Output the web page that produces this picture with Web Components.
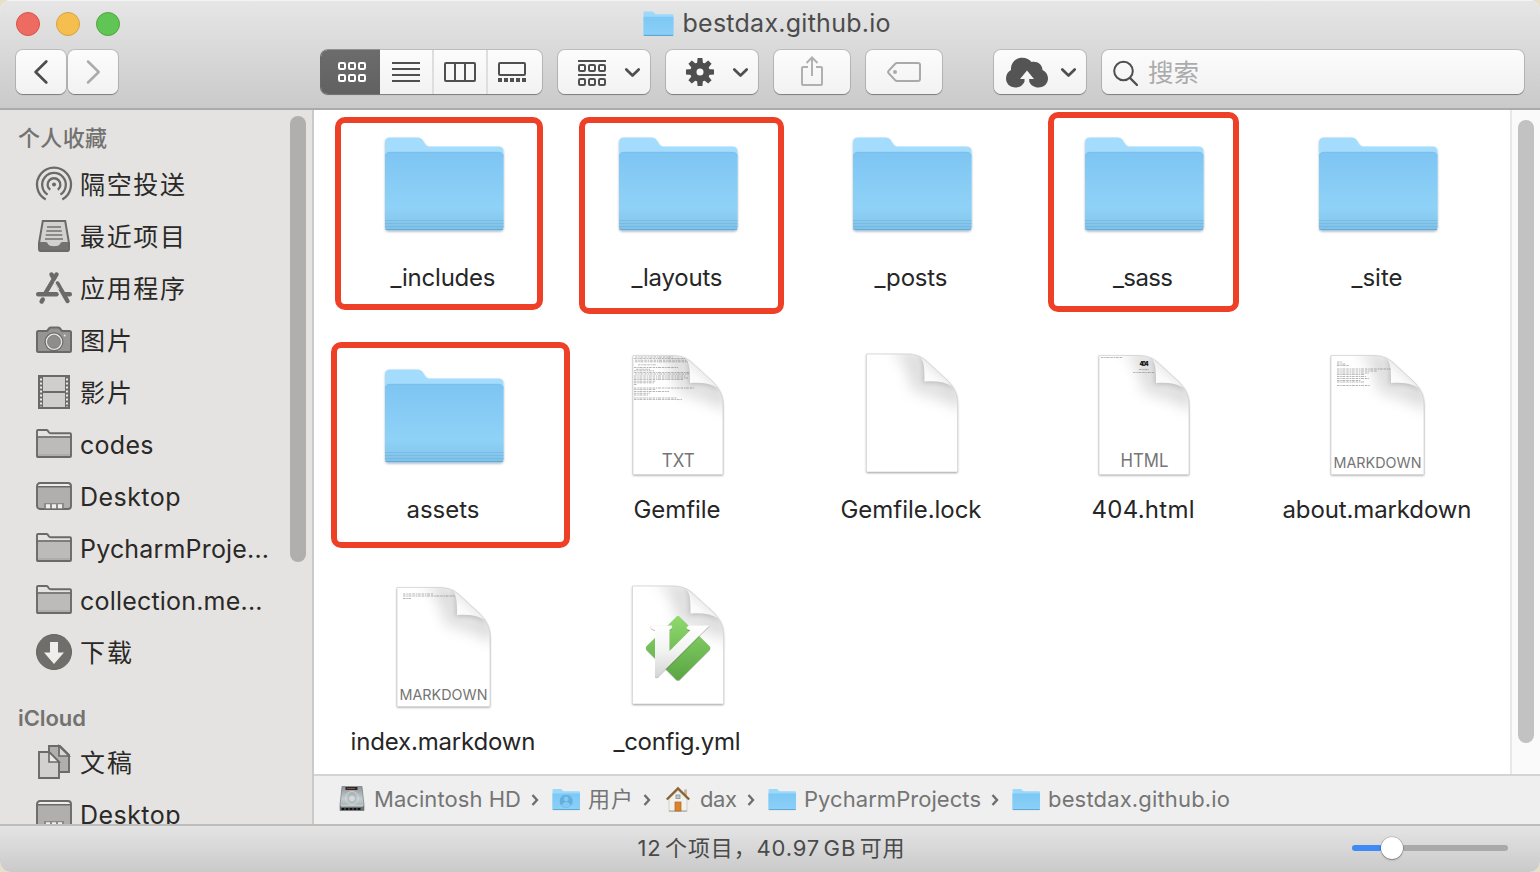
<!DOCTYPE html>
<html lang="zh-CN">
<head>
<meta charset="utf-8">
<title>bestdax.github.io</title>
<style>
html,body{margin:0;height:100%;overflow:hidden;background:#e6dfcb}
body{font-family:Inter,"Noto Sans CJK SC",sans-serif;color:#262626}
</style>
</head>
<body>
<finder-window>
  <tool-bar slot="toolbar"></tool-bar>
  <side-bar slot="sidebar">
    <side-heading style="height:38px;padding-bottom:4px;font-weight:500"><text-run w="89">个人收藏</text-run></side-heading>
    <side-item icon="airdrop"><text-run w="105">隔空投送</text-run></side-item>
    <side-item icon="recents"><text-run w="105">最近项目</text-run></side-item>
    <side-item icon="apps"><text-run w="105">应用程序</text-run></side-item>
    <side-item icon="camera"><text-run w="52">图片</text-run></side-item>
    <side-item icon="film"><text-run w="52">影片</text-run></side-item>
    <side-item icon="folder"><text-run w="73.5">codes</text-run></side-item>
    <side-item icon="desktop"><text-run w="100.5">Desktop</text-run></side-item>
    <side-item icon="folder"><text-run w="189">PycharmProje...</text-run></side-item>
    <side-item icon="folder"><text-run w="182.5">collection.me...</text-run></side-item>
    <side-item icon="download"><text-run w="52">下载</text-run></side-item>
    <side-heading style="height:38px;margin-top:20px"><text-run w="68">iCloud</text-run></side-heading>
    <side-item icon="docs"><text-run w="52">文稿</text-run></side-item>
    <side-item icon="desktop"><text-run w="100.5">Desktop</text-run></side-item>
  </side-bar>
  <file-grid slot="files">
    <file-item kind="folder"><text-run w="105">_includes</text-run></file-item>
    <file-item kind="folder"><text-run w="91">_layouts</text-run></file-item>
    <file-item kind="folder"><text-run w="73">_posts</text-run></file-item>
    <file-item kind="folder"><text-run w="60">_sass</text-run></file-item>
    <file-item kind="folder"><text-run w="51">_site</text-run></file-item>
    <file-item kind="folder"><text-run w="73">assets</text-run></file-item>
    <file-item kind="txt"><text-run w="87">Gemfile</text-run></file-item>
    <file-item kind="blank"><text-run w="141">Gemfile.lock</text-run></file-item>
    <file-item kind="html"><text-run w="103">404.html</text-run></file-item>
    <file-item kind="about"><text-run w="189">about.markdown</text-run></file-item>
    <file-item kind="index"><text-run w="185">index.markdown</text-run></file-item>
    <file-item kind="vim"><text-run w="127">_config.yml</text-run></file-item>
    <mark-box slot="marks" style="left:20.5px;top:7px;width:208.5px;height:193px"></mark-box>
    <mark-box slot="marks" style="left:264.5px;top:7px;width:205.5px;height:197px"></mark-box>
    <mark-box slot="marks" style="left:733.5px;top:2px;width:191.500px;height:200px"></mark-box>
    <mark-box slot="marks" style="left:17px;top:232px;width:239px;height:206px"></mark-box>
  </file-grid>
  <path-bar slot="path">
    <path-item icon="disk"><text-run w="147">Macintosh HD</text-run></path-item>
    <path-item icon="users"><text-run w="45">用户</text-run></path-item>
    <path-item icon="home"><text-run w="37">dax</text-run></path-item>
    <path-item icon="folder"><text-run w="177">PycharmProjects</text-run></path-item>
    <path-item icon="folder" last><text-run w="182">bestdax.github.io</text-run></path-item>
  </path-bar>
  <status-bar slot="status"><text-run w="267" style="word-spacing:-3.5px">12 个项目，40.97 GB 可用</text-run></status-bar>
</finder-window>

<script>
const define = (name, html, after) => {
  const tpl = document.createElement('template');
  tpl.innerHTML = typeof html === 'string' ? html : '';
  customElements.define(name, class extends HTMLElement {
    connectedCallback() {
      if (this.shadowRoot) return;
      const root = this.attachShadow({ mode: 'open' });
      if (typeof html === 'function') root.innerHTML = html(this);
      else root.append(tpl.content.cloneNode(true));
      if (after) after(this, root);
    }
  });
};

/* ---------- artwork ---------- */
const folderArt = `
<defs>
<linearGradient id="f" x1="0" y1="0" x2="0" y2="1"><stop offset="0" stop-color="#7ec5f3"/><stop offset=".7" stop-color="#8fd2f7"/><stop offset=".86" stop-color="#88caf0"/><stop offset="1" stop-color="#7ebfe7"/></linearGradient>
<filter id="s" x="-10%" y="-10%" width="120%" height="125%"><feDropShadow dx="0" dy="1" stdDeviation="1" flood-color="#000" flood-opacity=".28"/></filter>
</defs>
<g filter="url(#s)"><path d="M5 22.500q0-5 5-5H37.500c2.500 0 4 .8 5.300 2.800l2.600 3.900c1.200 1.700 2.400 2.300 4.400 2.300H118.500q5 0 5 5V107q0 3.500-3.500 3.500H8.500Q5 110.500 5 107Z" fill="#a4dcfd"/>
<path d="M5 37q0-5 5-5H118.500q5 0 5 5V107q0 3.500-3.500 3.500H8.500Q5 110.500 5 107Z" fill="url(#f)"/></g>
<path d="M5.300 36.500q.3-4.200 4.700-4.200H118.500q4.500 0 4.800 4.200" fill="none" stroke="#75bdeb" stroke-width=".7"/>
<path d="M5 100.500H123.500M5 103.500H123.500M5 106.500H123.500" stroke="#6fafd8" stroke-width="1" opacity=".5"/>
<path d="M5.500 109.500H123" stroke="#69a5cb" stroke-width="1.200" opacity=".8"/>`;

const doc = (x, x2, y, y2, inner, top = '') => {
  const X = n => x2 - 109 + n, Y = n => y - 3.5 + n;
  const page = `M${x} ${y}H${X(57)}C${X(68)} ${y} ${X(73)} ${Y(6)} ${X(79)} ${Y(11.5)}L${X(98)} ${Y(29)}C${X(106)} ${Y(37)} ${X(109)} ${Y(43)} ${X(109)} ${Y(54)}V${y2}H${x}Z`;
  return `<defs>
<filter id="s" x="-10%" y="-10%" width="120%" height="125%"><feDropShadow dx="0" dy="1" stdDeviation="1.100" flood-color="#000" flood-opacity=".38"/></filter>
<filter id="b" x="-60%" y="-60%" width="220%" height="220%"><feGaussianBlur stdDeviation="8"/></filter>
<filter id="b2" x="-50%" y="-50%" width="200%" height="200%"><feGaussianBlur stdDeviation="2.500"/></filter>
<linearGradient id="c" x1="0" y1="1" x2=".6" y2=".35"><stop offset="0" stop-color="#fff"/><stop offset=".55" stop-color="#fafafa"/><stop offset="1" stop-color="#e6e6e6"/></linearGradient>
<clipPath id="k"><path d="${page}"/></clipPath></defs>
<path d="${page}" fill="#fff" filter="url(#s)"/>
<g clip-path="url(#k)">
<path d="M${X(40)} ${Y(-4)}L${X(76)} ${Y(4)}V${Y(31)}L${X(114)} ${Y(34)}V${Y(60)}C${X(98)} ${Y(46)} ${X(76)} ${Y(42)} ${X(64)} ${Y(39)}C${X(64)} ${Y(20)} ${X(56)} ${Y(8)} ${X(40)} ${Y(-4)}Z" fill="#000" opacity=".17" filter="url(#b)"/>
<path d="M${X(70)} ${Y(3)}C${X(75)} ${Y(12)} ${X(75)} ${Y(20)} ${X(75)} ${Y(32)}C${X(90)} ${Y(32)} ${X(98)} ${Y(34)} ${X(106)} ${Y(39)}L${X(100)} ${Y(30)}Z" fill="#000" opacity=".2" filter="url(#b2)"/>
${inner}
<path d="M${X(70.5)} ${Y(5)}C${X(75.5)} ${Y(10)} ${X(76)} ${Y(16)} ${X(76)} ${Y(31)}C${X(88)} ${Y(30)} ${X(97)} ${Y(31.5)} ${X(104)} ${Y(36)}L${X(98)} ${Y(29)}L${X(79)} ${Y(11.5)}Z" fill="url(#c)"/>
</g>
<path d="${page}" fill="none" stroke="#c8c8c8" stroke-width=".6"/>${top}`;
};
const tag = (t, cx, y, size, len) => `<text x="${cx}" y="${y}" text-anchor="middle" font-family="Inter,sans-serif" font-weight="400" font-size="${size}" fill="#757575" textLength="${len}" lengthAdjust="spacingAndGlyphs">${t}</text>`;
const lines = (rows, dash = '2.500 .8 1.500 .6 3 .9') => rows.map(([x, y, w, o]) => `<path d="M${x} ${y}h${w}" stroke="#444" stroke-width=".7" stroke-dasharray="${dash}" opacity="${o || .55}"/>`).join('');

const fileArt = {
  folder: folderArt,
  txt: doc(19, 109, 3.5, 122.5, lines([[21,5,38],[20,6.600,52],[21,8.200,52],[21,9.800,54],[24,12.800,18],[20,15.500,44],[22,17.300,14],[20,18.800,20],[20,20.400,56],[21,22,54],[20,24,52],[20,26,54],[20,27.600,50],[20,29.200,22],[20,30.800,20],[20,32.500,3],[20,36,60],[20,37.600,22],[20,39.500,35],[20,41.300,16],[20,43,14],[20,46,43],[20,47.600,48]]), tag('TXT', 64.300, 114.800, 18, 33)),
  blank: doc(18.5, 109.5, 2, 120, ''),
  html: doc(19, 109, 3.5, 122.5, lines([[21,5.500,22]]) + `<text x="64" y="14" text-anchor="middle" font-family="Inter,sans-serif" font-weight="900" font-size="5.500" fill="#111" textLength="9">404</text>` + lines([[59,17.600,10],[53,20.600,22]]), tag('HTML', 64.500, 114.800, 18, 48)),
  about: doc(17, 110, 3.5, 122.5, lines([[23,10,5],[23,12,9],[23,13.500,12],[23,17,54],[23,19,40],[23,21,32],[23,22.600,28],[23,24.500,29],[23,26.500,32],[23,28.500,24],[23,30,28],[23,33.500,33]]), tag('MARKDOWN', 63.500, 116, 15, 88)),
  index: doc(17, 110, 3.5, 122.5, lines([[23,10,30],[23,12,52],[23,14.500,8]]), tag('MARKDOWN', 63.500, 116, 15, 88)),
  vim: doc(18.5, 109.5, 2, 120, '', `<defs><linearGradient id="g" x1="0" y1="0" x2="0" y2="1"><stop offset="0" stop-color="#8fd96e"/><stop offset="1" stop-color="#5aa543"/></linearGradient>
<linearGradient id="v" x1="0" y1="0" x2="0" y2="1"><stop offset="0" stop-color="#fff"/><stop offset=".5" stop-color="#f1f3f1"/><stop offset="1" stop-color="#d4d4d4"/></linearGradient>
<filter id="vs" x="-10%" y="-10%" width="120%" height="120%"><feDropShadow dx="0" dy=".6" stdDeviation=".7" flood-opacity=".5"/></filter></defs>
<path d="M62 33.200q2-2.200 4 0L95.300 62q2 2 0 4L66 95.200q-2 2.200-4 0L32.800 66q-2-2 0-4Z" fill="url(#g)" filter="url(#vs)"/>
<path d="M36 41.500H58q1 3-2.500 4.200V67L76.500 46q-4-.5-4-2.500l2-2H95.500L44.500 92.300q-2.500 2-3.500-.3V46q-4.500-1-5-4.500Z" fill="url(#v)" filter="url(#vs)"/>`)
};

const sideArt = {
  airdrop: `<g fill="none" stroke="#6b6a68" stroke-width="2.300"><circle cx="18" cy="17.600" r="2" fill="#6b6a68" stroke="none"/><path d="M14.200 22.800a6.400 6.400 0 1 1 7.600 0"/><path d="M11.600 27.600a11.800 11.800 0 1 1 12.800 0"/><path d="M9.700 32.500a17 17 0 1 1 16.600 0"/></g>`,
  recents: `<path d="M7 2H29L33 24V32q0 1-1 1H4q-1 0-1-1V24Z" fill="#d2d1cf"/><path d="M3 23H9.500q2 0 2.500 2c1 3 11 3 12 0q.5-2 2.500-2H33V31q0 2-2 2H5q-2 0-2-2Z" fill="#73726f"/><path d="M6.800 2H29.200L33 24V30q0 2-2 2H5q-2 0-2-2V24Z" fill="none" stroke="#6b6a68" stroke-width="2"/><path d="M11 8H25M10.300 12H25.700M9.700 16H26.300M9 20H27" stroke="#73726f" stroke-width="1.700"/>`,
  apps: `<g stroke="#6b6a68" fill="none" stroke-linecap="round"><path d="M2.200 23.200H20.500" stroke-width="4.400"/><path d="M28.500 23.200H33.800" stroke-width="4.400"/><path d="M20.500 3.500 9.500 22" stroke-width="4.400"/><path d="M15.500 3.500 17 6" stroke-width="4.400"/><path d="M21.500 12.500 31.500 30" stroke-width="4.400"/><path d="M6.800 28.500 5.600 30.500" stroke-width="4.400"/></g><path d="M18.300 10.500 23 18.500" stroke="#e4e3e1" stroke-width="1"/>`,
  camera: `<path d="M1 9.500q0-1.500 1.500-1.500H11l2.500-3q.5-.6 1.500-.6h7q1 0 1.500.6l2.500 3H33.500Q35 8 35 9.500V27.500q0 1.500-1.500 1.500H2.500Q1 29 1 27.500Z" fill="#969593" stroke="#6b6a68" stroke-width="2"/><circle cx="18" cy="18.800" r="9.500" fill="#6b6a68"/><circle cx="18" cy="18.800" r="8.300" fill="#e4e3e1"/><circle cx="18" cy="18.800" r="6.500" fill="#8e8d8b" stroke="#777674" stroke-width=".8"/><circle cx="28.700" cy="12.500" r="1" fill="#e4e3e1"/>`,
  film: `<rect x="3" y="1" width="30" height="32" fill="#cfcecc" stroke="#6b6a68" stroke-width="2"/><path d="M5 1V33M31 1V33" stroke="#6b6a68" stroke-width="4"/><path d="M5 3.500V32M31 3.500V32" stroke="#eae9e7" stroke-width="2" stroke-dasharray="2 2"/><path d="M6 17H30" stroke="#6b6a68" stroke-width="2"/>`,
  folder: `<path d="M1 9V29q0 1 1 1H34q1 0 1-1V9Z" fill="#bcbbb9"/><path d="M2 28H34" stroke="#a5a4a2" stroke-width="1.200"/><path d="M1 29V4q0-1 1-1H10.500q.8 0 1.200.6L13 5.500q.5.700 1.300.7H34q1 0 1 1V29q0 1-1 1H2q-1 0-1-1Z" fill="none" stroke="#6b6a68" stroke-width="1.900"/><path d="M1 12q0-2 1.500-2H33.500Q35 10 35 12" fill="none" stroke="#6b6a68" stroke-width="1.700"/>`,
  desktop: `<rect x="1" y="4" width="34" height="26" rx="3" fill="#b0afad"/><path d="M2 7q0-2 2-2H32q2 0 2 2Z" fill="#eeedeb"/><rect x="1" y="4" width="34" height="26" rx="3" fill="none" stroke="#6b6a68" stroke-width="1.900"/><path d="M1 7.800H35" stroke="#6b6a68" stroke-width="1.600"/><rect x="8" y="24" width="20" height="5.500" fill="#8b8a88"/><path d="M10 25.200h4v4h-4zM16 25.200h4v4h-4zM22 25.200h4v4h-4z" fill="#f0efed"/>`,
  download: `<circle cx="18" cy="17" r="17.500" fill="#6f6e6b" stroke="#656462" stroke-width="1"/><path d="M14 7H22V17.500H28L18 29 8 17.500H14Z" fill="#efeeec"/>`,
  docs: `<path d="M13 1H24L33 10V27H13Z" fill="#b0afad" stroke="#6b6a68" stroke-width="1.900"/><path d="M23 1V11H33Z" fill="#d8d7d5" stroke="#6b6a68" stroke-width="1.700"/><path d="M3 7H13L23 17V33H3Z" fill="#d2d1cf" stroke="#6b6a68" stroke-width="1.900"/><path d="M13 7V17H23Z" fill="#e9e8e6" stroke="#6b6a68" stroke-width="1.700"/>`
};

const miniFolder = `<defs><linearGradient id="m" x1="0" y1="0" x2="0" y2="1"><stop offset="0" stop-color="#7cc8f4"/><stop offset="1" stop-color="#8bd0f8"/></linearGradient></defs><path d="M.5 5q0-1 1-1H9l2.500 2.200H27q1 0 1 1V24.500H.5Z" fill="#9bd8fa"/><path d="M.5 8.500H28V24q0 .8-.8.8H1.300Q.5 24.800.5 24Z" fill="url(#m)"/><path d="M.8 24.600H27.700" stroke="#5fa3cd" stroke-width="1"/>`;
const pathArt = {
  folder: miniFolder,
  users: miniFolder + `<circle cx="14.200" cy="16.200" r="6.500" fill="#62afe0"/><circle cx="14.200" cy="14" r="2.400" fill="#84c9f2"/><path d="M9.800 20.500q1-3.500 4.400-3.500t4.400 3.500q-4.400 4-8.800 0Z" fill="#84c9f2"/>`,
  disk: `<defs><linearGradient id="d" x1="0" y1="0" x2="0" y2="1"><stop offset="0" stop-color="#8d9496"/><stop offset=".5" stop-color="#c2cbce"/><stop offset="1" stop-color="#a2a9ab"/></linearGradient></defs><path d="M4 1.500H24L26 20V25.500H2V20Z" fill="url(#d)" stroke="#777d7f" stroke-width=".7"/><rect x="7.500" y="2" width="12" height="3" fill="#2a2a2c"/><path d="M9 3.500h8" stroke="#c55" stroke-width=".7"/><circle cx="14" cy="13" r="6.500" fill="none" stroke="#dbe2e4" stroke-width=".7"/><circle cx="14" cy="13.500" r="3.500" fill="#d3dadc" stroke="#9ba2a4" stroke-width=".6"/><path d="M2 21H26V25.500H2Z" fill="#6a6f71"/><path d="M3 21H25" stroke="#dde2e3" stroke-width="1"/><path d="M3.500 24h20" stroke="#111" stroke-width="1.800" stroke-dasharray="3 1"/>`,
  home: `<path d="M5 14 14 5.500 23 14V26.500H5Z" fill="#f1f1ee" stroke="#c9c9c4" stroke-width=".8"/><path d="M5 26H23" stroke="#aaa" stroke-width="1.200"/><rect x="20" y="4.500" width="3" height="6" fill="#c9b99c"/><path d="M2.800 14.500 14 3.500 25.200 14.500" fill="none" stroke="#8a6437" stroke-width="2.400"/><rect x="11" y="17" width="6" height="9" fill="#e08325" stroke="#a9672a" stroke-width=".7"/><rect x="12" y="10" width="4" height="3.500" fill="#a9d0ea" stroke="#9a8a72" stroke-width=".8"/>`
};

const sq = (x, y, c) => `<rect x="${x + 1}" y="${y + 1}" width="6" height="6" rx="1.200" fill="none" stroke="${c}" stroke-width="2"/>`;
const grid6 = (x, ys, c) => ys.map(y => [0, 10, 20].map(d => sq(x + d, y, c)).join('')).join('');
const chev = x => `<path d="M${x} 69.500l6.200 6 6.200-6" fill="none" stroke="#4f4f4f" stroke-width="2.700" stroke-linecap="round" stroke-linejoin="round"/>`;
const toolArt = {
  back: `<path d="M46.300 61.500 35.600 72l10.700 10.500" fill="none" stroke="#4d4d4d" stroke-width="2.700" stroke-linecap="round" stroke-linejoin="round"/>`,
  forward: `<path d="M88 61.500 98.700 72 88 82.500" fill="none" stroke="#ababab" stroke-width="2.500" stroke-linecap="round" stroke-linejoin="round"/>`,
  icons: grid6(338, [62, 74], '#fff'),
  list: `<path d="M392 63H420M392 69H420M392 75H420M392 81H420" stroke="#4f4f4f" stroke-width="2"/>`,
  columns: `<rect x="445" y="63" width="30" height="18" rx="1" fill="none" stroke="#4f4f4f" stroke-width="2"/><path d="M455 63V81M465 63V81" stroke="#4f4f4f" stroke-width="2"/>`,
  gallery: `<rect x="499" y="63" width="26" height="12" rx="1" fill="none" stroke="#4f4f4f" stroke-width="2"/><path d="M498 80H526" stroke="#4f4f4f" stroke-width="4" stroke-dasharray="4 2"/>`,
  group: `<path d="M578 61H606M578 75H606" stroke="#4f4f4f" stroke-width="2"/>${grid6(578, [64, 78], '#4f4f4f')}${chev(626.300)}`,
  gear: `<g fill="#4f4f4f">${[0,45,90,135].map(a => `<path d="M697.600 58h4.800l.6 6v16l-.6 6h-4.800l-.6-6V64Z" transform="rotate(${a} 700 72)"/>`).join('')}<circle cx="700" cy="72" r="9.800"/></g><circle cx="700" cy="72" r="3.500" fill="#f8f8f8"/>${chev(734.300)}`,
  share: `<path d="M808 67H803q-1 0-1 1V84q0 1 1 1H821q1 0 1-1V68q0-1-1-1H816" fill="none" stroke="#b0b0b0" stroke-width="2"/><path d="M812 76V58M806.500 63 812 57.500 817.500 63" fill="none" stroke="#b0b0b0" stroke-width="2"/>`,
  tag: `<path d="M897 63H918q2 0 2 2V79q0 2-2 2H897q-1 0-2-1L888.500 73q-1-1 0-2L895 64q1-1 2-1Z" fill="none" stroke="#aaa" stroke-width="2"/><circle cx="895" cy="72" r="2" fill="#aaa"/>`,
  cloud: `<path d="M1015.500 87.500c-5.500 0-9.500-4-9.500-9 0-4 2-7 5-8.500-.5-7 4.500-12.300 11-12.300 4.500 0 7.500 1.800 9.500 4.300 5-1.500 11 2 11 8 3.500 1.500 5.500 5 5.500 8.500 0 5-4 9-9.500 9-4.500 0-8-2.500-9.300-6V79H1034L1027 70.500 1020 79h4.500v2.500c-1.300 3.500-4.500 6-9 6Z" fill="#545454"/>${chev(1062.300)}`,
};

/* ---------- text ---------- */
define('text-run', `<style>:host{display:block;white-space:pre;flex:none}span{display:inline-block}</style><span><slot></slot></span>`, (el, root) => {
  const want = +el.getAttribute('w'), n = [...el.textContent].length;
  el.fit = () => {
    const s = root.querySelector('span');
    s.style.letterSpacing = '0px';
    s.style.marginRight = '0px';
    const ls = (want - s.getBoundingClientRect().width) / (n - 1);
    s.style.letterSpacing = ls + 'px';
    s.style.marginRight = -ls + 'px';
    el.style.width = want + 'px';
  };
});

/* ---------- window ---------- */
define('finder-window', `<style>
:host{display:grid;width:1540px;height:872px;grid-template:110px 1fr 50px 48px / 314px 1fr;border-radius:11px;overflow:hidden;background:#fff}
slot{display:block;min-width:0;min-height:0}
.t{grid-column:1/3}.s{grid-row:2/4;overflow:hidden}.st{grid-column:1/3}
</style><slot class="t" name="toolbar"></slot><slot class="s" name="sidebar"></slot><slot name="files"></slot><slot name="path"></slot><slot class="st" name="status"></slot>`);

define('tool-button', el => {
  const x = el.getAttribute('x'), w = el.getAttribute('w');
  return `<style>:host{display:block;box-sizing:border-box;width:${w}px;height:44px;flex:none;border-radius:7px;background:linear-gradient(#fcfcfc,#f2f2f2);box-shadow:0 0 0 1px rgba(0,0,0,.13),0 1px 1px 0 rgba(0,0,0,.3)}
svg{display:block}</style><svg width="${w}" height="44" viewBox="${x} 50 ${w} 44">${toolArt[el.getAttribute('icon')] || ''}</svg>`;
});

define('view-switch', `<style>
:host{display:flex;flex:none;width:221px;height:44px;border-radius:7px;background:linear-gradient(#fcfcfc,#f2f2f2);box-shadow:0 0 0 1px rgba(0,0,0,.13),0 1px 1px 0 rgba(0,0,0,.3)}
svg{display:block;flex:none;box-sizing:border-box}.on{background:linear-gradient(#6c6c6c,#616161);border-radius:7px 0 0 7px;box-shadow:-.5px 0 0 .5px #686868}.d{width:2px;background:#dedede}
</style>
<svg class="on" width="59" height="44" viewBox="321 50 59 44">${toolArt.icons}</svg>
<svg width="52" height="44" viewBox="380 50 52 44">${toolArt.list}</svg><div class="d"></div>
<svg width="52" height="44" viewBox="434 50 52 44">${toolArt.columns}</svg><div class="d"></div>
<svg width="54" height="44" viewBox="488 50 54 44">${toolArt.gallery}</svg>`);

define('search-field', `<style>
:host{display:flex;align-items:center;gap:10px;width:422px;height:44px;box-sizing:border-box;padding-left:11px;border-radius:7px;background:linear-gradient(#fcfcfc,#f2f2f2);box-shadow:0 0 0 1px rgba(0,0,0,.13),0 1px 1px 0 rgba(0,0,0,.3);color:#ababab;font-size:25.500px;line-height:44px}
svg{flex:none}span{padding-top:2px}
</style><svg width="25" height="28" viewBox="0 0 25 28"><circle cx="10.500" cy="13" r="9.300" fill="none" stroke="#4f4f4f" stroke-width="2"/><path d="M17 20 24 27" stroke="#4f4f4f" stroke-width="2.400" stroke-linecap="round"/></svg><span>搜索</span>`);

define('tool-bar', `<style>
:host{display:flex;flex-direction:column;box-sizing:border-box;height:110px;background:linear-gradient(#e6e6e6,#cacaca);border-bottom:2px solid #a8a8a8;border-bottom-color:#ababab;border-top:1px solid #f4f4f4}
.top{display:grid;grid-template-columns:1fr auto 1fr;height:45px;align-items:center;padding-left:16px;padding-right:22px}
.lights{display:flex;gap:16px;padding-top:-1px}.lights i{width:24px;height:24px;box-sizing:border-box;border-radius:50%;border:1px solid}
.title{display:flex;align-items:center;gap:9px;font-size:25px;line-height:32px;color:#4c4c4c;margin-top:-2px;padding-right:1px}
.title svg{margin-top:-2px}
.row{display:flex;padding:4px 0 0 16px;height:44px}
</style>
<div class="top"><div class="lights"><i style="background:#ed6b60;border-color:#d65449"></i><i style="background:#f5bf4f;border-color:#d9a13e"></i><i style="background:#61c555;border-color:#4da73f"></i></div>
<div class="title"><svg width="31" height="30" viewBox="0 0 28.500 26" preserveAspectRatio="none">${miniFolder}</svg><text-run w="208">bestdax.github.io</text-run></div><span></span></div>
<div class="row">
<tool-button icon="back" x="16" w="50"></tool-button>
<tool-button icon="forward" x="68" w="50" style="margin-left:2px"></tool-button>
<view-switch style="margin-left:203px"></view-switch>
<tool-button icon="group" x="558" w="92" style="margin-left:16px"></tool-button>
<tool-button icon="gear" x="666" w="92" style="margin-left:16px"></tool-button>
<tool-button icon="share" x="774" w="76" style="margin-left:16px"></tool-button>
<tool-button icon="tag" x="866" w="76" style="margin-left:16px"></tool-button>
<tool-button icon="cloud" x="994" w="92" style="margin-left:52px"></tool-button>
<search-field style="margin-left:16px"></search-field>
</div>`);

/* ---------- sidebar ---------- */
define('side-bar', `<style>
:host{display:flex;height:714px;box-sizing:border-box;background:#e4e3e1;border-right:2px solid #cbcac9;padding-top:7px;overflow:hidden}
.list{flex:1;min-width:0}.thumb{width:16px;height:446px;margin:-1px 6px 0 0;border-radius:8px;background:#b0afae}
</style><div class="list"><slot></slot></div><div class="thumb"></div>`);
define('side-heading', `<style>:host{display:flex;align-items:center;padding-left:18px;font-size:22px;font-weight:600;color:#737270}</style><slot></slot>`);
define('side-item', el => `<style>
:host{display:flex;align-items:center;gap:8px;height:52px;padding-left:36px;font-size:25px;line-height:36px;color:#2a2927}
svg{overflow:visible;flex:none}
</style><svg width="36" height="36" viewBox="0 0 36 36">${sideArt[el.getAttribute('icon')]}</svg><slot></slot>`);

/* ---------- files ---------- */
define('file-grid', `<style>
:host{display:flex;position:relative;height:664px;background:#fff}
.g{flex:1;display:grid;grid-template-columns:234px 234px 234px 230px 238px;grid-auto-rows:232px;padding:10px 0 0 13px;align-content:start;overflow:hidden}
.track{box-sizing:border-box;width:30px;padding:10px 0 0 6px;background:#fafafa;border-left:2px solid #e8e8e8}
.thumb{width:16px;height:623px;border-radius:8px;background:#c2c2c2}
</style><div class="g"><slot></slot></div><div class="track"><div class="thumb"></div></div><slot name="marks"></slot>`);
define('mark-box', `<style>:host{display:block;position:absolute;box-sizing:border-box;border:6px solid #ee4027;border-radius:10px}</style>`);
define('file-item', el => `<style>
:host{display:flex;flex-direction:column;align-items:center;gap:13px;font-size:24px;line-height:34px;color:#262626}
.l{margin-left:-2px}svg{display:block;overflow:visible}
</style><svg width="128" height="128" viewBox="0 0 128 128">${fileArt[el.getAttribute('kind')]}</svg><div class="l"><slot></slot></div>`);

/* ---------- bottom bars ---------- */
define('path-bar', `<style>:host{display:flex;align-items:center;box-sizing:border-box;height:50px;padding:0 0 2px 24px;background:#efefef;border-top:2px solid #d4d4d4;font-size:22px;line-height:30px;color:#757575}</style><slot></slot>`);
define('path-item', el => `<style>:host{display:flex;align-items:center;gap:8px;flex:none;margin-right:8px}
.c{margin:2px 5px 0 2px}:host([last]) .c{display:none}svg{flex:none;overflow:visible;display:block}</style>
<svg width="28" height="28" viewBox="0 0 28 28">${pathArt[el.getAttribute('icon')]}</svg><slot></slot><svg class="c" width="8" height="12" viewBox="0 0 8 12"><path d="M1.500 1 6 6 1.500 11" fill="none" stroke="#6e6e6e" stroke-width="2.400"/></svg>`);
define('status-bar', `<style>
:host{display:grid;grid-template-columns:1fr auto 1fr;align-items:center;box-sizing:border-box;height:48px;padding:0 32px 2px 34px;background:linear-gradient(#e4e4e4,#cacaca);border-top:2px solid #bdbdbd;font-size:22px;line-height:30px;color:#4a4a4a}
.sl{justify-self:end;display:flex;align-items:center;width:156px}.a,.b{height:6px;border-radius:3px}.a{width:30px;background:#3f8af7}.b{flex:1;background:#a9a9a9}
.k{width:22px;height:22px;margin:0 -1px;border-radius:50%;background:#fff;box-shadow:0 0 0 .5px rgba(0,0,0,.25),0 1px 2px rgba(0,0,0,.3);z-index:1}
</style><span></span><slot></slot><div class="sl"><div class="a"></div><div class="k"></div><div class="b"></div></div>`);

/* fit every label once the whole tree is styled */
const fitAll = root => root.querySelectorAll('*').forEach(e => { if (e.fit) e.fit(); if (e.shadowRoot) fitAll(e.shadowRoot); });
fitAll(document);
</script>
</body>
</html>
